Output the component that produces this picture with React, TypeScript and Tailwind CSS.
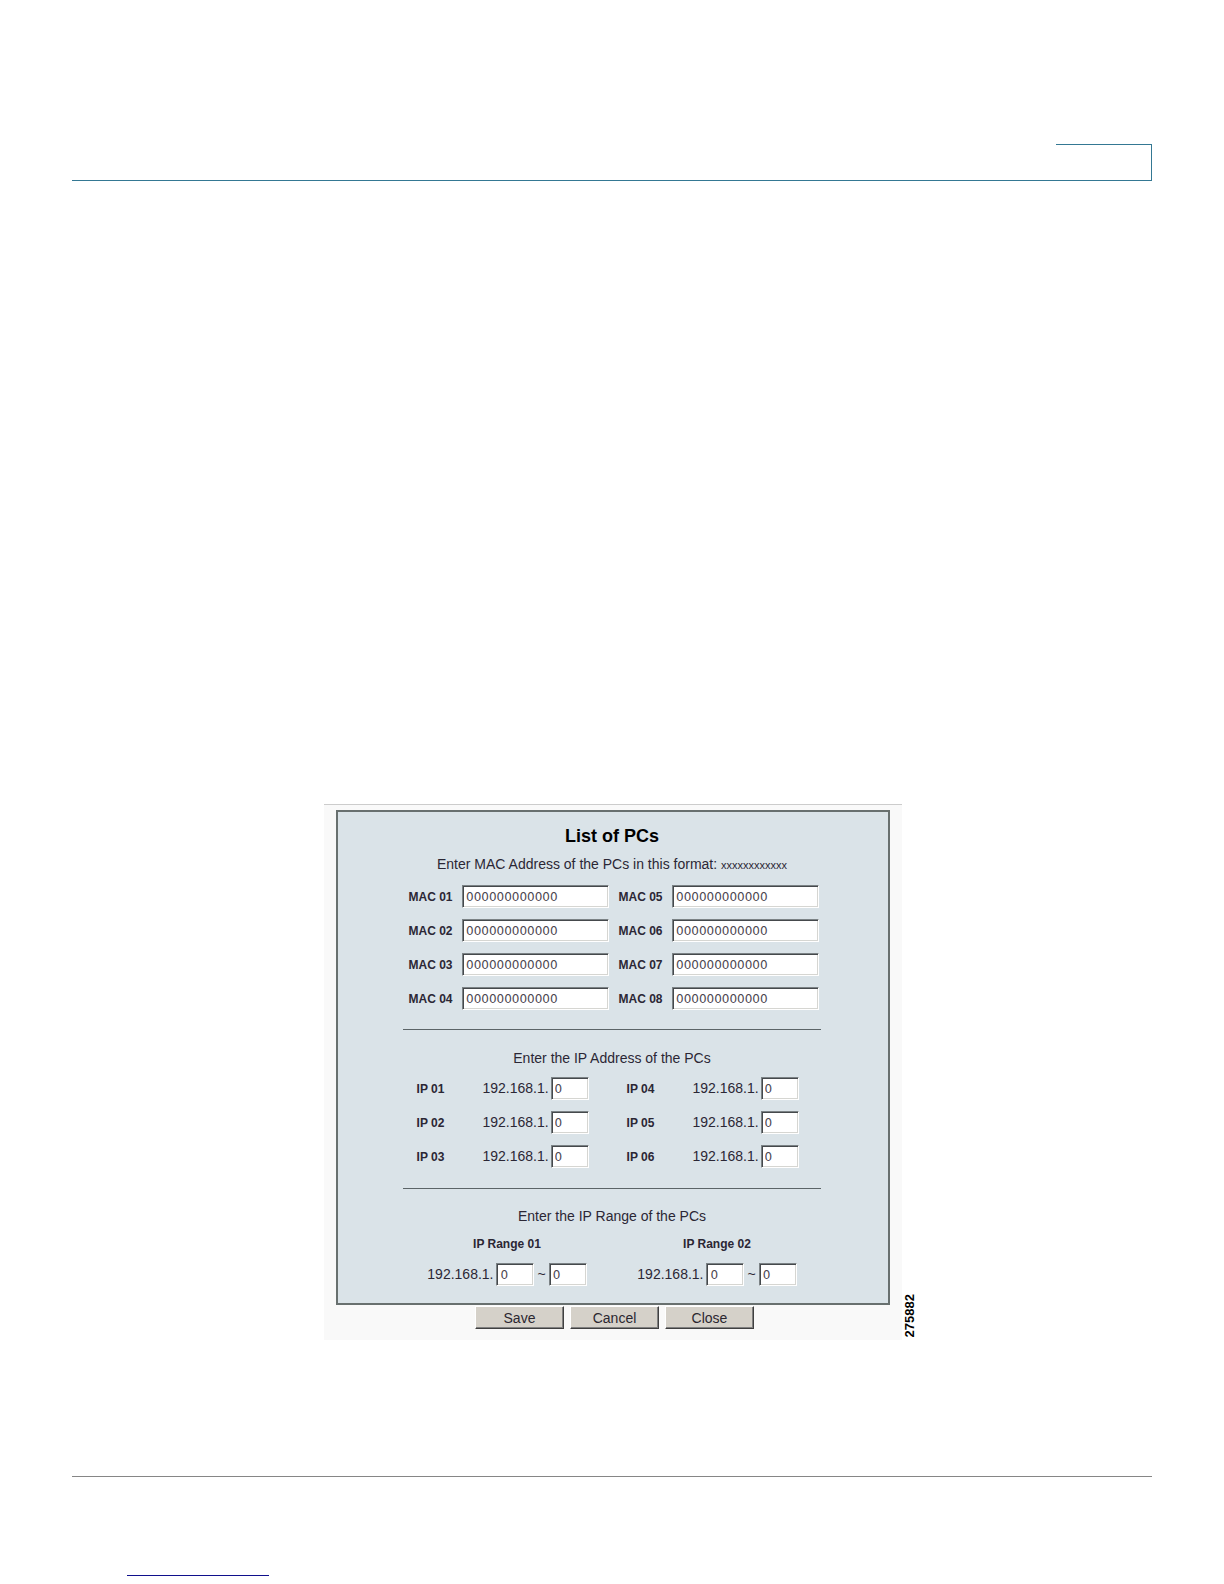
import { useState } from 'react';

const macFields = ['01', '05', '02', '06', '03', '07', '04', '08'];
const ipFields = ['01', '04', '02', '05', '03', '06'];
const rangeFields = ['01', '02'];

type FieldProps = {
  id: string;
  initial: string;
  wide?: boolean;
  label?: string;
};

function Field({ id, initial, wide, label }: FieldProps) {
  const [value, setValue] = useState(initial);

  return (
    <input
      id={id}
      type="text"
      aria-label={label}
      value={value}
      onChange={(e) => setValue(e.target.value)}
      className={`h-[23px] border border-t-[#7b8285] border-l-[#7b8285] border-r-white border-b-white bg-white px-[3px] font-['DejaVu_Sans'] text-[12px] text-[#4c4650] shadow-[inset_1px_1px_0_#45494c,inset_-1px_-1px_0_#d6d6d2] outline-none ${
        wide ? 'w-[147px]' : 'w-[38px]'
      }`}
    />
  );
}

function Divider() {
  return <hr className="mx-px border-0 border-t border-[#5b6467]" />;
}

function ActionButton({ children, type = 'button' }: { children: string; type?: 'button' | 'submit' }) {
  return (
    <button
      type={type}
      className="h-[23px] w-[89px] border border-t-white border-l-white border-r-[#404040] border-b-[#404040] bg-[#d5d1c9] text-[14px] leading-5 text-[#2b2730] shadow-[inset_-1px_-1px_0_#808080]"
    >
      {children}
    </button>
  );
}

function PcListForm() {
  return (
    <form onSubmit={(e) => e.preventDefault()} className="border-t border-[#cccccc] bg-[#f9f9f9] px-3 pt-[5px] pb-[11px] text-[#2b2735]">
      <section className="flex flex-col items-center border-2 border-[#68706f] bg-[#dae3e8] pt-3 pr-[2px] pb-[17px]">
        <div className="w-[420px]">
          <h1 className="text-center text-[18px] leading-6 font-bold text-black">List of PCs</h1>
          <p className="mt-2 text-center text-[14px] leading-4">
            Enter MAC Address of the PCs in this format: <span className="text-[11px]">xxxxxxxxxxxx</span>
          </p>
          <div className="mt-3 mb-[19px] grid grid-cols-2 gap-y-[11px]">
            {macFields.map((n) => (
              <div key={n} className="flex items-center gap-[3px]">
                <label htmlFor={`mac-${n}`} className="w-[57px] text-center text-[12px] font-bold">
                  MAC {n}
                </label>
                <Field id={`mac-${n}`} initial="000000000000" wide />
              </div>
            ))}
          </div>

          <Divider />
          <p className="mt-5 text-center text-[14px] leading-4">Enter the IP Address of the PCs</p>
          <div className="mt-[11px] mb-5 grid grid-cols-2 gap-y-[11px]">
            {ipFields.map((n) => (
              <div key={n} className="flex items-center gap-[3px]">
                <label htmlFor={`ip-${n}`} className="w-[57px] text-center text-[12px] font-bold">
                  IP {n}
                </label>
                <div className="flex w-[147px] items-center justify-center gap-[2px] text-[14px]">
                  <span>192.168.1.</span>
                  <Field id={`ip-${n}`} initial="0" />
                </div>
              </div>
            ))}
          </div>

          <Divider />
          <p className="mt-[19px] text-center text-[14px] leading-4">Enter the IP Range of the PCs</p>
          <div className="mt-3 grid grid-cols-2">
            {rangeFields.map((n) => (
              <fieldset key={n} className="flex flex-col items-center">
                <legend className="mx-auto text-[12px] leading-4 font-bold">IP Range {n}</legend>
                <div className="mt-[11px] flex items-center gap-[3px] text-[14px]">
                  <span>192.168.1.</span>
                  <Field id={`range-${n}-from`} initial="0" label={`IP Range ${n} from`} />
                  <span>~</span>
                  <Field id={`range-${n}-to`} initial="0" label={`IP Range ${n} to`} />
                </div>
              </fieldset>
            ))}
          </div>
        </div>
      </section>
      <div className="mt-px flex justify-center gap-[6px] pl-[3px]">
        <ActionButton type="submit">Save</ActionButton>
        <ActionButton>Cancel</ActionButton>
        <ActionButton>Close</ActionButton>
      </div>
    </form>
  );
}

export default function App() {
  return (
    <div className="flex min-h-screen flex-col bg-white px-[72px] pt-36 font-['Liberation_Sans',sans-serif]">
      <header className="border-b border-[#347893]">
        <div className="ml-auto h-9 w-24 border-t border-r border-[#347893]" />
      </header>

      <main className="mt-[623px] grid grid-cols-[1fr_578px_1fr] pl-[2px]">
        <div />
        <PcListForm />
        <span className="mb-[3px] rotate-180 self-end text-[13px] leading-4 font-bold text-black [writing-mode:vertical-rl]">
          275882
        </span>
      </main>

      <footer className="mt-auto border-t border-[#868686] pb-2">
        <div className="mt-[98px] ml-[55px] h-px w-[142px] bg-[#10108c]" />
      </footer>
    </div>
  );
}
